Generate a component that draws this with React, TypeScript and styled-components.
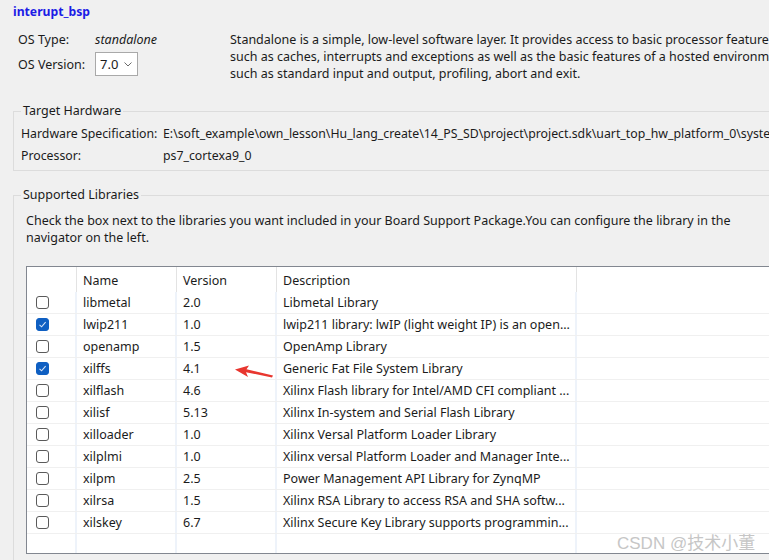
import React, { FC } from 'react';
import styled, { createGlobalStyle } from 'styled-components';

const GlobalStyle = createGlobalStyle`
    html, body {
        margin: 0;
        padding: 0;
        background: #f0f0f0;
    }
    body {
        font-family: 'Noto Sans', 'Open Sans', sans-serif;
        font-size: 12.5px;
        color: #1b1b1b;
    }
`;

const Page = styled.div`
    position: relative;
    width: 769px;
    height: 560px;
    overflow: hidden;
    background: #f0f0f0;
`;

const Title = styled.div`
    padding: 3px 0 0 13px;
    height: 18px;
    line-height: 18px;
    font-size: 12.2px;
    font-weight: bold;
    color: #1c1ce6;
`;

const OsRow = styled.div`
    display: flex;
    padding: 10px 0 0 18px;
    height: 65px;
`;

const OsGrid = styled.div`
    display: grid;
    flex-shrink: 0;
    grid-template-columns: 77px auto;
    grid-template-rows: 17px 24px;
    row-gap: 4px;
    align-items: center;
    width: 212px;
`;

const Value = styled.span<{ $italic?: boolean }>`
    font-style: ${(p) => (p.$italic ? 'italic' : 'normal')};
`;

const Select = styled.div`
    display: flex;
    align-items: center;
    justify-content: space-between;
    box-sizing: border-box;
    width: 43px;
    height: 24px;
    padding: 0 5px 0 4px;
    background: #ffffff;
    border: 1px solid #a9a9a9;
    font-size: 13px;
`;

const Description = styled.p`
    margin: 0;
    line-height: 17px;
    white-space: nowrap;
`;

const Group = styled.fieldset<{ $top: number }>`
    margin: ${(p) => p.$top}px 0 0 13px;
    padding: 0 0 0 7px;
    width: 820px;
    border: 1px solid #dcdcdc;
    border-right: none;
`;

const LibGroup = styled(Group)`
    padding-bottom: 30px;
`;

const Legend = styled.legend`
    padding: 0 2px;
    margin-left: 0;
    line-height: 16px;
    font-size: 12.5px;
`;

const HwGrid = styled.div`
    display: grid;
    grid-template-columns: 142px auto;
    grid-auto-rows: 22px;
    align-items: center;
    padding: 3px 0 4px 0;
    white-space: nowrap;
    font-size: 12.3px;
`;

const Hint = styled.p`
    margin: 9px 0 0 5px;
    line-height: 17px;
    white-space: nowrap;
`;

const Table = styled.div`
    margin: 20px 0 0 5px;
    width: 800px;
    background: #ffffff;
    border: 1px solid #828790;
    border-right: none;
`;

const Row = styled.div<{ $head?: boolean }>`
    display: grid;
    grid-template-columns: 50px 100px 100px 300px 1fr;
    height: ${(p) => (p.$head ? '25px' : '21px')};
    border-bottom: ${(p) => (p.$head ? 'none' : '1px solid #f0f0f0')};
`;

const Cell = styled.div<{ $head?: boolean }>`
    display: flex;
    align-items: center;
    padding-left: 6px;
    padding-top: ${(p) => (p.$head ? '2px' : '0')};
    overflow: hidden;
    white-space: nowrap;
    border-right: ${(p) => (p.$head ? '1px solid #e3e3e3' : '2px solid #eef3fa')};
`;

const BoxCell = styled(Cell)`
    padding-left: 9px;
`;

const Check = styled.span<{ $on: boolean }>`
    display: inline-flex;
    align-items: center;
    justify-content: center;
    box-sizing: border-box;
    width: 13px;
    height: 13px;
    border-radius: 3px;
    border: 1px solid ${(p) => (p.$on ? '#0f5fc2' : '#5a5a5a')};
    background: ${(p) => (p.$on ? '#0f5fc2' : '#ffffff')};
`;

const Filler = styled.div`
    display: grid;
    grid-template-columns: 50px 100px 100px 300px 1fr;
    height: 19px;
`;

const Arrow = styled.svg`
    position: absolute;
    left: 235px;
    top: 365px;
`;

const Watermark = styled.div`
    position: absolute;
    left: 617px;
    top: 529px;
    font-family: 'Liberation Sans', 'Noto Sans CJK SC', sans-serif;
    font-size: 17px;
    color: #c6c6c6;
    white-space: nowrap;
`;

interface Lib {
    name: string;
    version: string;
    desc: string;
    on?: boolean;
}

const libs: Lib[] = [
    { name: 'libmetal', version: '2.0', desc: 'Libmetal Library' },
    { name: 'lwip211', version: '1.0', desc: 'lwip211 library: lwIP (light weight IP) is an open...', on: true },
    { name: 'openamp', version: '1.5', desc: 'OpenAmp Library' },
    { name: 'xilffs', version: '4.1', desc: 'Generic Fat File System Library', on: true },
    { name: 'xilflash', version: '4.6', desc: 'Xilinx Flash library for Intel/AMD CFI compliant ...' },
    { name: 'xilisf', version: '5.13', desc: 'Xilinx In-system and Serial Flash Library' },
    { name: 'xilloader', version: '1.0', desc: 'Xilinx Versal Platform Loader Library' },
    { name: 'xilplmi', version: '1.0', desc: 'Xilinx versal Platform Loader and Manager Inte...' },
    { name: 'xilpm', version: '2.5', desc: 'Power Management API Library for ZynqMP' },
    { name: 'xilrsa', version: '1.5', desc: 'Xilinx RSA Library to access RSA and SHA softw...' },
    { name: 'xilskey', version: '6.7', desc: 'Xilinx Secure Key Library supports programmin...' },
];

const Tick: FC = () => (
    <svg width="9" height="9" viewBox="0 0 9 9">
        <path d="M1.5 4.8 L3.6 6.8 L7.6 2.2" fill="none" stroke="#d6e4f7" strokeWidth="1.1" />
    </svg>
);

export default function App() {
    return (
        <Page>
            <GlobalStyle />
            <Title>interupt_bsp</Title>
            <OsRow>
                <OsGrid>
                    <span>OS Type:</span>
                    <Value $italic>standalone</Value>
                    <span>OS Version:</span>
                    <Select>
                        <span>7.0</span>
                        <svg width="8" height="5" viewBox="0 0 8 5">
                            <path d="M0.5 0.5 L4 4 L7.5 0.5" fill="none" stroke="#6b6b6b" strokeWidth="1" />
                        </svg>
                    </Select>
                </OsGrid>
                <Description>
                    Standalone is a simple, low-level software layer. It provides access to basic processor features
                    <br />
                    such as caches, interrupts and exceptions as well as the basic features of a hosted environment,
                    <br />
                    such as standard input and output, profiling, abort and exit.
                </Description>
            </OsRow>
            <Group $top={7}>
                <Legend>Target Hardware</Legend>
                <HwGrid>
                    <span>Hardware Specification:</span>
                    <span>E:\soft_example\own_lesson\Hu_lang_create\14_PS_SD\project\project.sdk\uart_top_hw_platform_0\system.hdf</span>
                    <span>Processor:</span>
                    <span>ps7_cortexa9_0</span>
                </HwGrid>
            </Group>
            <LibGroup $top={16}>
                <Legend>Supported Libraries</Legend>
                <Hint>
                    Check the box next to the libraries you want included in your Board Support Package.You can configure the library in the
                    <br />
                    navigator on the left.
                </Hint>
                <Table>
                    <Row $head>
                        <Cell $head />
                        <Cell $head>Name</Cell>
                        <Cell $head>Version</Cell>
                        <Cell $head>Description</Cell>
                        <div />
                    </Row>
                    {libs.map((lib) => (
                        <Row key={lib.name}>
                            <BoxCell>
                                <Check $on={!!lib.on}>{lib.on && <Tick />}</Check>
                            </BoxCell>
                            <Cell>{lib.name}</Cell>
                            <Cell>{lib.version}</Cell>
                            <Cell>{lib.desc}</Cell>
                            <div />
                        </Row>
                    ))}
                    <Filler>
                        <Cell />
                        <Cell />
                        <Cell />
                        <Cell />
                        <div />
                    </Filler>
                </Table>
            </LibGroup>
            <Arrow width="40" height="14" viewBox="0 0 40 14">
                <polygon points="0,4.5 14,0.5 11.5,4.2 38,10.5 37,12.5 11,7.2 13,12" fill="#e8362f" />
            </Arrow>
            <Watermark>CSDN @技术小董</Watermark>
        </Page>
    );
}
